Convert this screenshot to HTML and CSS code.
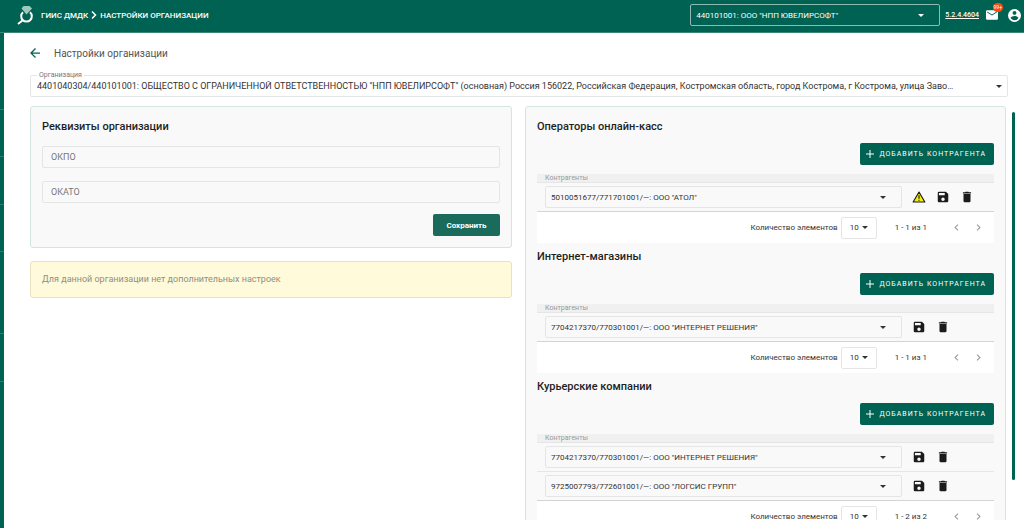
FILE: index.html
```html
<!DOCTYPE html>
<html lang="ru">

<head>
    <meta charset="UTF-8">
    <meta name="viewport" content="width=device-width, initial-scale=1.0">
    <title>Настройки организации</title>
    <link rel="stylesheet" href="styles.css">
</head>

<body>

    <svg class="sprite" aria-hidden="true">
        <symbol id="i-plus" viewBox="0 0 24 24"><path d="M20 13h-7v7h-2v-7H4v-2h7V4h2v7h7z"/></symbol>
        <symbol id="i-save" viewBox="0 0 24 24"><path d="M15 9H5V5h10m-3 14a3 3 0 0 1-3-3 3 3 0 0 1 3-3 3 3 0 0 1 3 3 3 3 0 0 1-3 3m5-16H5a2 2 0 0 0-2 2v14a2 2 0 0 0 2 2h14a2 2 0 0 0 2-2V7z"/></symbol>
        <symbol id="i-delete" viewBox="0 0 24 24"><path d="M19 4h-3.500l-1-1h-5l-1 1H5v2h14M6 19a2 2 0 0 0 2 2h8a2 2 0 0 0 2-2V7H6z"/></symbol>
        <symbol id="i-prev" viewBox="0 0 24 24"><path d="M15.410 16.580 10.830 12l4.580-4.590L14 6l-6 6 6 6z"/></symbol>
        <symbol id="i-next" viewBox="0 0 24 24"><path d="M8.590 16.580 13.170 12 8.590 7.410 10 6l6 6-6 6z"/></symbol>
    </svg>

    <header class="header">
        <a class="logo" href="#" aria-label="ГИИС ДМДК">
            <svg viewBox="0 0 18 20" width="18" height="20">
                <path d="M6 7.300a5.300 5.300 0 1 0 7 0" fill="none" stroke="#fff" stroke-width="2"/>
                <path d="M5.800 15.200 1 19" stroke="#fff" stroke-width="2"/>
                <path d="M6.500 1h6L15 3.500 9.500 9.500 4.500 3.500z" fill="#9fc9bf"/>
            </svg>
        </a>
        <nav class="breadcrumbs">
            <a href="#">ГИИС ДМДК</a>
            <svg viewBox="0 0 6 8" width="6" height="8"><path d="M1 0.500 4.500 4 1 7.500" fill="none" stroke="#fff" stroke-width="1.500"/></svg>
            <a href="#">НАСТРОЙКИ ОРГАНИЗАЦИИ</a>
        </nav>
        <div class="select header-select">
            <select aria-label="Текущая организация">
                <option>440101001: ООО "НПП ЮВЕЛИРСОФТ"</option>
            </select>
        </div>
        <a class="version" href="#">5.2.4.4604</a>
        <button class="mail" type="button" aria-label="Сообщения">
            <svg viewBox="2 4 20 16" width="12" height="10"><path fill="#fff" d="m20 8-8 5-8-5V6l8 5 8-5m0-2H4c-1.110 0-2 .890-2 2v12a2 2 0 0 0 2 2h16a2 2 0 0 0 2-2V6a2 2 0 0 0-2-2"/></svg>
            <span class="badge">99+</span>
        </button>
        <button class="account" type="button" aria-label="Профиль">
            <svg viewBox="2 2 20 20" width="13" height="13"><path fill="#fff" d="M12 19.200c-2.500 0-4.710-1.280-6-3.200.030-2 4-3.100 6-3.100s5.970 1.100 6 3.100a7.230 7.230 0 0 1-6 3.200M12 5a3 3 0 0 1 3 3 3 3 0 0 1-3 3 3 3 0 0 1-3-3 3 3 0 0 1 3-3m0-3A10 10 0 0 0 2 12a10 10 0 0 0 10 10 10 10 0 0 0 10-10A10 10 0 0 0 12 2"/></svg>
        </button>
    </header>

    <div class="layout">
        <aside class="sidebar"></aside>

        <main class="page">
            <div class="page-title">
                <a href="#" aria-label="Назад">
                    <svg viewBox="4 4 16 16" width="10" height="10"><path fill="#006252" d="M20 11v2H8l5.500 5.500-1.420 1.420L4.160 12l7.920-7.920L13.500 5.500 8 11z"/></svg>
                </a>
                <h1>Настройки организации</h1>
            </div>

            <div class="select org-select">
                <label for="org">Организация</label>
                <select id="org">
                    <option>4401040304/440101001: ОБЩЕСТВО С ОГРАНИЧЕННОЙ ОТВЕТСТВЕННОСТЬЮ "НПП ЮВЕЛИРСОФТ" (основная) Россия 156022, Российская Федерация, Костромская область, город Кострома, г Кострома, улица Заво…</option>
                </select>
            </div>

            <div class="content">
                <div class="column">
                    <form class="card requisites">
                        <h2>Реквизиты организации</h2>
                        <input type="text" placeholder="ОКПО" aria-label="ОКПО">
                        <input type="text" placeholder="ОКАТО" aria-label="ОКАТО">
                        <button class="save-btn" type="button">Сохранить</button>
                    </form>
                    <div class="notice">Для данной организации нет дополнительных настроек</div>
                </div>

                <div class="column card">
                    <section class="group">
                        <h2>Операторы онлайн-касс</h2>
                        <button class="add-btn" type="button"><svg><use href="#i-plus"/></svg>ДОБАВИТЬ КОНТРАГЕНТА</button>
                        <table>
                            <thead>
                                <tr><th>Контрагенты</th><th class="actions-col"></th></tr>
                            </thead>
                            <tbody>
                                <tr>
                                    <td><div class="select"><select aria-label="Контрагент"><option>5010051677/771701001/—: ООО "АТОЛ"</option></select></div></td>
                                    <td class="actions">
                                        <button type="button" aria-label="Предупреждение"><svg viewBox="0 0 24 24"><path d="M12 3.500 22 20.500H2z" fill="#f7ef00" stroke="#1b1b1b" stroke-width="2" stroke-linejoin="round"/><path d="M12 9v6M12 16.500v2" stroke="#1b1b1b" stroke-width="2"/></svg></button><button type="button" aria-label="Сохранить"><svg><use href="#i-save"/></svg></button><button type="button" aria-label="Удалить"><svg><use href="#i-delete"/></svg></button>
                                    </td>
                                </tr>
                            </tbody>
                        </table>
                        <div class="pager">
                            <label for="size1">Количество элементов</label>
                            <div class="select"><select id="size1"><option>10</option></select></div>
                            <span class="range">1 - 1 из 1</span>
                            <button type="button" aria-label="Предыдущая страница" disabled><svg><use href="#i-prev"/></svg></button>
                            <button type="button" aria-label="Следующая страница" disabled><svg><use href="#i-next"/></svg></button>
                        </div>
                    </section>

                    <section class="group">
                        <h2>Интернет-магазины</h2>
                        <button class="add-btn" type="button"><svg><use href="#i-plus"/></svg>ДОБАВИТЬ КОНТРАГЕНТА</button>
                        <table>
                            <thead>
                                <tr><th>Контрагенты</th><th class="actions-col"></th></tr>
                            </thead>
                            <tbody>
                                <tr>
                                    <td><div class="select"><select aria-label="Контрагент"><option>7704217370/770301001/—: ООО "ИНТЕРНЕТ РЕШЕНИЯ"</option></select></div></td>
                                    <td class="actions">
                                        <button type="button" aria-label="Сохранить"><svg><use href="#i-save"/></svg></button><button type="button" aria-label="Удалить"><svg><use href="#i-delete"/></svg></button>
                                    </td>
                                </tr>
                            </tbody>
                        </table>
                        <div class="pager">
                            <label for="size2">Количество элементов</label>
                            <div class="select"><select id="size2"><option>10</option></select></div>
                            <span class="range">1 - 1 из 1</span>
                            <button type="button" aria-label="Предыдущая страница" disabled><svg><use href="#i-prev"/></svg></button>
                            <button type="button" aria-label="Следующая страница" disabled><svg><use href="#i-next"/></svg></button>
                        </div>
                    </section>

                    <section class="group">
                        <h2>Курьерские компании</h2>
                        <button class="add-btn" type="button"><svg><use href="#i-plus"/></svg>ДОБАВИТЬ КОНТРАГЕНТА</button>
                        <table>
                            <thead>
                                <tr><th>Контрагенты</th><th class="actions-col"></th></tr>
                            </thead>
                            <tbody>
                                <tr>
                                    <td><div class="select"><select aria-label="Контрагент"><option>7704217370/770301001/—: ООО "ИНТЕРНЕТ РЕШЕНИЯ"</option></select></div></td>
                                    <td class="actions">
                                        <button type="button" aria-label="Сохранить"><svg><use href="#i-save"/></svg></button><button type="button" aria-label="Удалить"><svg><use href="#i-delete"/></svg></button>
                                    </td>
                                </tr>
                                <tr>
                                    <td><div class="select"><select aria-label="Контрагент"><option>9725007793/772601001/—: ООО "ЛОГСИС ГРУПП"</option></select></div></td>
                                    <td class="actions">
                                        <button type="button" aria-label="Сохранить"><svg><use href="#i-save"/></svg></button><button type="button" aria-label="Удалить"><svg><use href="#i-delete"/></svg></button>
                                    </td>
                                </tr>
                            </tbody>
                        </table>
                        <div class="pager">
                            <label for="size3">Количество элементов</label>
                            <div class="select"><select id="size3"><option>10</option></select></div>
                            <span class="range">1 - 2 из 2</span>
                            <button type="button" aria-label="Предыдущая страница" disabled><svg><use href="#i-prev"/></svg></button>
                            <button type="button" aria-label="Следующая страница" disabled><svg><use href="#i-next"/></svg></button>
                        </div>
                    </section>
                </div>

                <div class="scrollbar"><div class="thumb"></div></div>
            </div>
        </main>
    </div>

</body>

</html>
```
FILE: styles.css
```css
* {
    box-sizing: border-box;
}

body {
    margin: 0;
    height: 100vh;
    display: flex;
    flex-direction: column;
    overflow: hidden;
    background-color: #fff;
    color: #333;
    font-family: Roboto, "Liberation Sans", sans-serif;
    font-size: 8px;
}

h1,
h2 {
    margin: 0;
}

button,
input,
select {
    font-family: inherit;
    font-size: inherit;
    color: inherit;
    margin: 0;
}

button {
    display: flex;
    align-items: center;
    justify-content: center;
    padding: 0;
    border: none;
    background: none;
}

.sprite {
    display: none;
}

/* select */
.select {
    display: grid;
    align-items: center;
    position: relative;
}

.select select {
    grid-area: 1 / 1;
    appearance: none;
    width: 100%;
    min-width: 0;
    height: 22px;
    padding: 0 24px 0 5px;
    border: 1px solid #e4e6e6;
    border-radius: 2px;
    background: transparent;
    overflow: hidden;
    text-overflow: ellipsis;
    white-space: nowrap;
}

.select::after {
    content: "";
    grid-area: 1 / 1;
    justify-self: end;
    margin-right: 16px;
    border: 3px solid transparent;
    border-top-color: currentColor;
    border-bottom: none;
    pointer-events: none;
}

/* header */
.header {
    flex: none;
    display: flex;
    align-items: center;
    height: 33px;
    padding: 0 3px 2px 17px;
    background-color: #006252;
    border-bottom: 1px solid #3d8577;
    color: #fff;
}

.header a {
    color: #fff;
}

.logo {
    display: flex;
}

.breadcrumbs {
    display: flex;
    align-items: center;
    gap: 3px;
    margin-left: 6px;
    font-weight: 500;
}

.breadcrumbs a {
    text-decoration: none;
}

.header-select {
    width: 250px;
    margin-left: auto;
}

.header-select select {
    border-color: #8fbab1;
}

.version {
    margin-left: 5px;
    font-size: 7px;
    font-weight: 500;
}

.mail {
    position: relative;
    margin-left: 7px;
}

.badge {
    position: absolute;
    top: -7px;
    right: -5px;
    padding: 0 1px;
    border-radius: 5px;
    background-color: #ff4a12;
    color: #fff;
    font-size: 5px;
    line-height: 9px;
}

.account {
    margin-left: 10px;
}

/* layout */
.layout {
    flex: 1;
    min-height: 0;
    display: flex;
}

.sidebar {
    flex: none;
    width: 4px;
    background: linear-gradient(
        #006252 76px, #2f7d6f 76px 77px,
        #006252 77px 123px, #2f7d6f 123px 124px,
        #006252 124px 171px, #2f7d6f 171px 172px,
        #006252 172px 218px, #2f7d6f 218px 219px,
        #006252 219px 300px, #2f7d6f 300px 301px,
        #006252 301px 348px, #2f7d6f 348px 349px,
        #006252 349px
    );
}

.page {
    flex: 1;
    min-width: 0;
    display: flex;
    flex-direction: column;
    padding: 10px 8px 8px 26px;
}

.page-title {
    display: flex;
    align-items: center;
    gap: 14px;
    height: 20px;
}

.page-title a {
    display: flex;
}

.page-title h1 {
    font-size: 10px;
    font-weight: 400;
    color: #555;
}

.org-select {
    margin: 12px 8px 9px 0;
}

.org-select label {
    position: absolute;
    top: -4px;
    left: 7px;
    padding: 0 2px;
    background-color: #fff;
    color: #777;
    font-size: 7px;
    line-height: 8px;
}

.org-select select {
    padding: 0 14px 0 6px;
    font-size: 9px;
}

.org-select::after {
    margin-right: 6px;
}

.content {
    flex: 1;
    min-height: 0;
    display: grid;
    grid-template-columns: 1fr 1fr 10px;
    grid-template-rows: minmax(0, 1fr);
    align-items: start;
    overflow: hidden;
}

.column {
    min-width: 0;
}

.column:first-child {
    margin-right: 6px;
}

.column + .column {
    margin-left: 7px;
}

.card {
    padding: 9px 11px 11px;
    border: 1px solid #d3e5e1;
    border-radius: 3px;
    background-color: #f9f9f9;
}

.card h2 {
    font-size: 11px;
    font-weight: 500;
    line-height: 22px;
    color: #1f1f1f;
}

.requisites {
    display: flex;
    flex-direction: column;
}

.requisites input {
    height: 22px;
    margin-bottom: 13px;
    padding: 0 8px;
    border: 1px solid #e4e6e6;
    border-radius: 2px;
    background: transparent;
    font-size: 9px;
}

.requisites h2 {
    margin-bottom: 8px;
}

.requisites input::placeholder {
    color: #777;
}

.save-btn {
    align-self: flex-end;
    width: 67px;
    height: 22px;
    margin-top: -2px;
    border-radius: 2px;
    background-color: #1a6b5c;
    color: #fff;
    font-weight: 700;
}

.notice {
    margin-top: 13px;
    padding: 0 11px;
    border: 1px solid #e8e2bf;
    border-radius: 3px;
    background-color: #fffad9;
    color: #8f8f84;
    font-size: 9px;
    line-height: 35px;
}

/* groups */
.group {
    display: flex;
    flex-direction: column;
    margin-bottom: 3px;
}

.add-btn {
    align-self: flex-end;
    gap: 3px;
    height: 22px;
    margin: 5px 0 9px;
    padding: 0 8px 0 4px;
    border-radius: 2px;
    background-color: #006252;
    color: #fff;
    font-size: 7px;
    letter-spacing: 1px;
}

.add-btn svg {
    width: 12px;
    height: 12px;
    fill: #fff;
}

table {
    width: 100%;
    border-collapse: separate;
    border-spacing: 0;
    table-layout: fixed;
}

th {
    height: 9px;
    padding: 0 8px;
    border-bottom: 1px solid #e6e6e6;
    background-color: #f0f0f0;
    color: #999;
    font-size: 7px;
    font-weight: 400;
    line-height: 8px;
    text-align: left;
}

.actions-col {
    width: 92px;
}

td {
    height: 29px;
    padding: 0 0 0 8px;
    border-bottom: 1px solid #e6e6e6;
}

tr:last-child td {
    border-bottom-color: #d4d4d4;
}

td.actions {
    padding-left: 5px;
}

.actions button {
    display: inline-flex;
    width: 24px;
    height: 16px;
    vertical-align: middle;
}

.actions svg {
    width: 14px;
    height: 14px;
    fill: #1b1b1b;
}

.pager {
    display: flex;
    align-items: center;
    justify-content: flex-end;
    height: 31px;
    padding-right: 5px;
    background-color: #fff;
}

.pager .select {
    width: 36px;
    margin-left: 3px;
}

.pager .select select {
    padding: 0 8px;
}

.pager .select::after {
    margin-right: 9px;
}

.range {
    margin: 0 18px;
}

.pager button {
    width: 22px;
}

.pager button svg {
    width: 13px;
    height: 13px;
    fill: #999;
}

.scrollbar {
    align-self: stretch;
    padding: 6px 1px 40px 6px;
}

.thumb {
    height: 100%;
    border-radius: 2px;
    background-color: #006252;
}
```
